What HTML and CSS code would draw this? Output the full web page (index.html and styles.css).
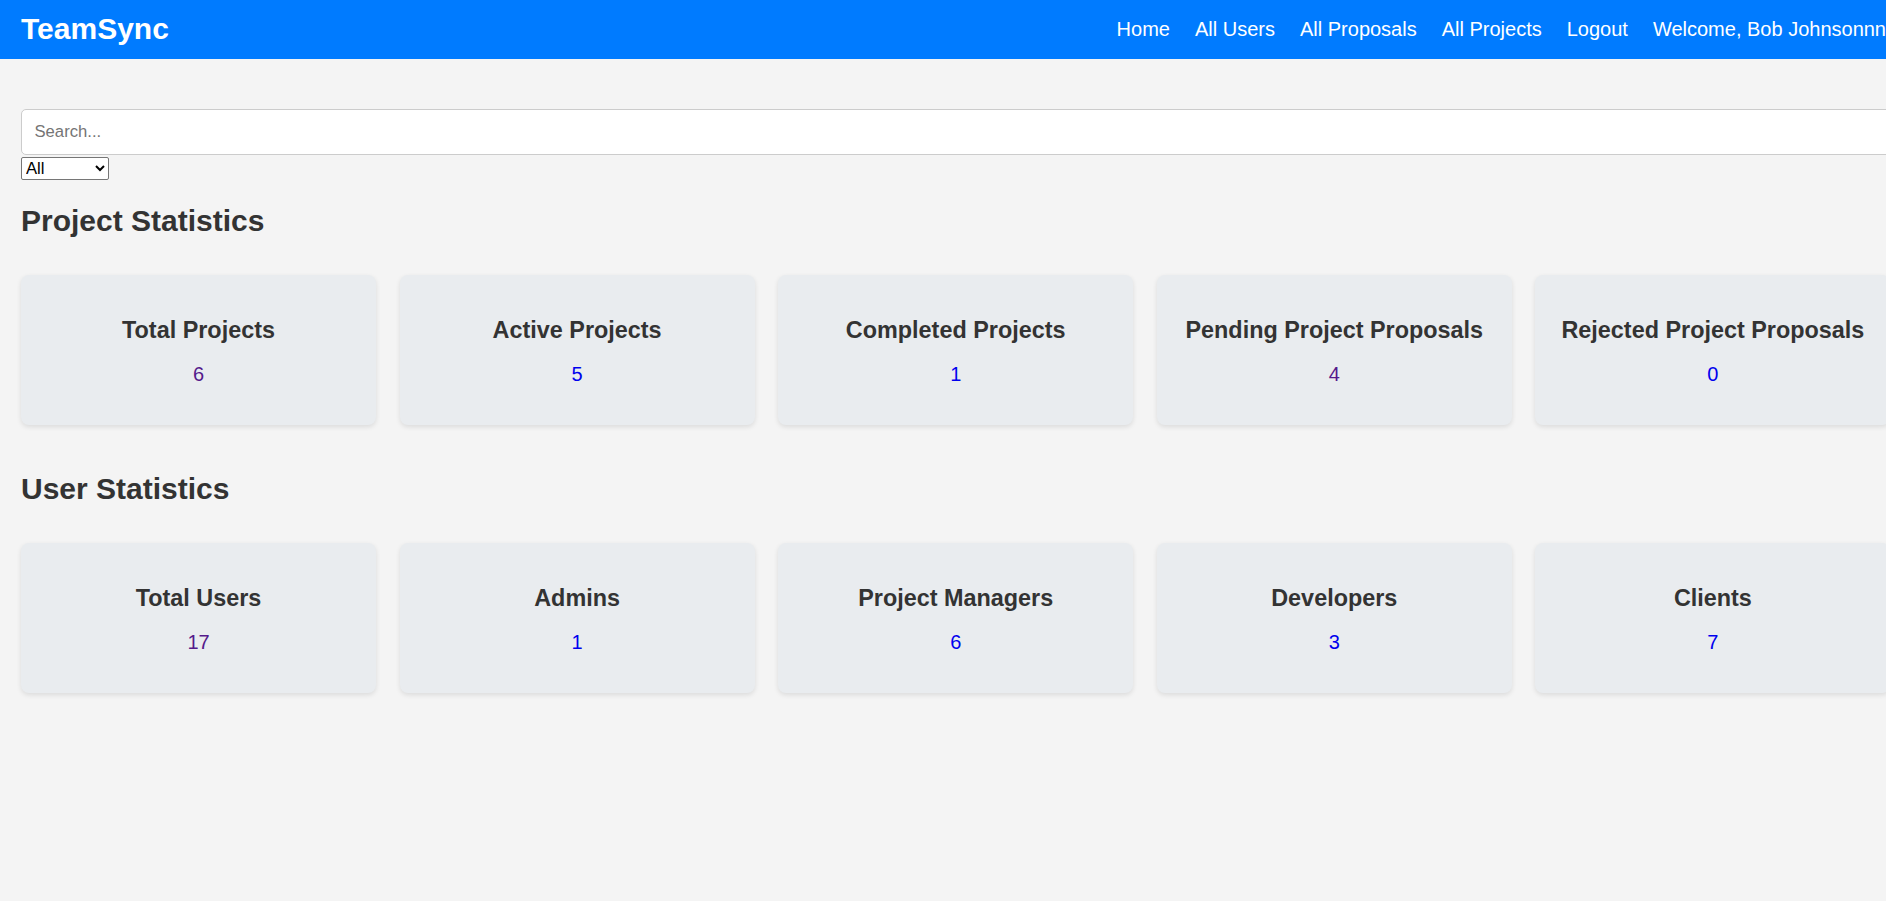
FILE: index.html
```html
<!DOCTYPE html>
<html lang="en">
<head>
<meta charset="utf-8">
<title>TeamSync</title>
<link rel="stylesheet" href="styles.css">
</head>
<body>
<header class="topbar">
  <h1 class="logo">TeamSync</h1>
  <nav class="nav">
    <a href="#" class="nav-link">Home</a>
    <a href="#" class="nav-link">All Users</a>
    <a href="#" class="nav-link">All Proposals</a>
    <a href="#" class="nav-link">All Projects</a>
    <a href="#" class="nav-link">Logout</a>
    <span class="nav-link">Welcome, Bob Johnsonnn</span>
  </nav>
</header>
<main class="main">
  <input class="search" type="text" placeholder="Search...">
  <select class="filter">
    <option>All</option>
    <option>Projects</option>
    <option>Users</option>
  </select>

  <section class="section">
    <h2 class="section-title">Project Statistics</h2>
    <div class="cards">
      <div class="card"><h3 class="card-title">Total Projects</h3><p class="card-value"><a href="#" class="num visited">6</a></p></div>
      <div class="card"><h3 class="card-title">Active Projects</h3><p class="card-value"><a href="#" class="num">5</a></p></div>
      <div class="card"><h3 class="card-title">Completed Projects</h3><p class="card-value"><a href="#" class="num">1</a></p></div>
      <div class="card"><h3 class="card-title">Pending Project Proposals</h3><p class="card-value"><a href="#" class="num visited">4</a></p></div>
      <div class="card"><h3 class="card-title">Rejected Project Proposals</h3><p class="card-value"><a href="#" class="num">0</a></p></div>
    </div>
  </section>

  <section class="section">
    <h2 class="section-title">User Statistics</h2>
    <div class="cards">
      <div class="card"><h3 class="card-title">Total Users</h3><p class="card-value"><a href="#" class="num visited">17</a></p></div>
      <div class="card"><h3 class="card-title">Admins</h3><p class="card-value"><a href="#" class="num">1</a></p></div>
      <div class="card"><h3 class="card-title">Project Managers</h3><p class="card-value"><a href="#" class="num">6</a></p></div>
      <div class="card"><h3 class="card-title">Developers</h3><p class="card-value"><a href="#" class="num">3</a></p></div>
      <div class="card"><h3 class="card-title">Clients</h3><p class="card-value"><a href="#" class="num">7</a></p></div>
    </div>
  </section>
</main>
</body>
</html>
```
FILE: styles.css
```css
html {
  overflow-x: hidden;
}

body {
  margin: 0;
  background: #f4f4f4;
  font-family: "Liberation Sans", Arial, sans-serif;
  color: #333;
  overflow-x: hidden;
}

.topbar {
  display: flex;
  align-items: center;
  height: 58.7px;
  padding-left: 21px;
  background: #007bff;
  box-sizing: border-box;
}

.logo {
  margin: 0;
  font-size: 30px;
  line-height: 34.5px;
  font-weight: bold;
  color: #fff;
}

.nav {
  margin-left: auto;
  display: flex;
  gap: 25px;
  white-space: nowrap;
}

.nav-link {
  color: #fff;
  font-size: 20px;
  line-height: 23px;
  text-decoration: none;
}

.main {
  padding: 0 0 0 21px;
}

.search {
  display: block;
  box-sizing: border-box;
  width: calc(100% + 30px);
  height: 45.7px;
  margin: 50.6px 0 0;
  padding: 0 12.5px;
  border: 1px solid #ccc;
  border-radius: 5px;
  background: #fff;
  font-family: "Liberation Sans", Arial, sans-serif;
  font-size: 16.67px;
  color: #333;
}

.search::placeholder {
  color: #757575;
}

.filter {
  display: block;
  box-sizing: border-box;
  width: 87.5px;
  height: 22.4px;
  margin-top: 2.3px;
  font-family: "Liberation Sans", Arial, sans-serif;
  font-size: 16.67px;
  color: #000;
  background: #fff;
  border: 1px solid #767676;
  border-radius: 2px;
}

.section-title {
  margin: 24.7px 0 36.1px;
  font-size: 30px;
  line-height: 34.5px;
  font-weight: bold;
  color: #333;
}

.cards {
  display: flex;
  gap: 23.6px;
  margin-bottom: 47.1px;
}

.card {
  flex: 0 0 355px;
  box-sizing: border-box;
  padding: 42px 20px 39px;
  background: #e9ecef;
  border-radius: 8px;
  box-shadow: 0 2px 5px rgba(0, 0, 0, 0.1);
  text-align: center;
}

.card-title {
  margin: 0 0 19px;
  font-size: 23.4px;
  line-height: 27px;
  font-weight: bold;
  color: #333;
  white-space: nowrap;
}

.card-value {
  margin: 0;
  font-size: 20px;
  line-height: 23px;
}

.num {
  color: #0000ee;
  text-decoration: none;
}

.num.visited {
  color: #551a8b;
}
```
